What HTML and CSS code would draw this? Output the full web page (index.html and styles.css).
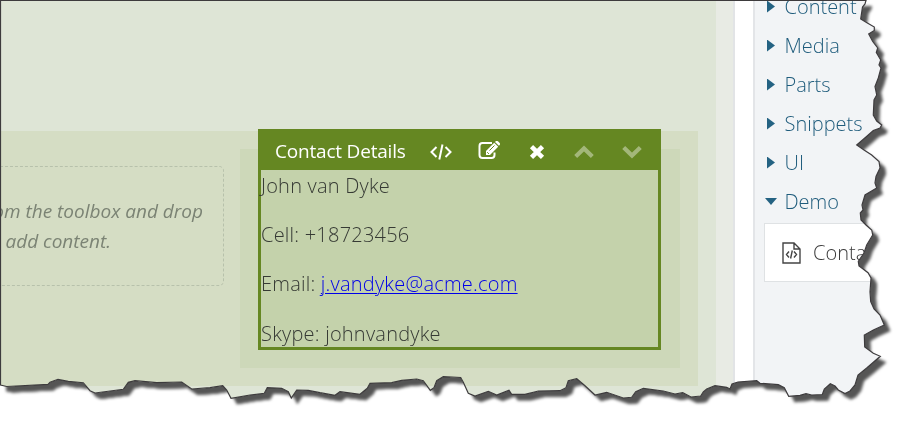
FILE: index.html
```
<!DOCTYPE html>
<html lang="en">
<head>
<meta charset="utf-8">
<title>Layout editor</title>
<link rel="stylesheet" href="styles.css">
</head>
<body>
<div class="sheet">
  <div class="shadow"><div class="page">
    <main class="editor">
      <section class="canvas">
        <div class="row">
          <div class="column">
            <div class="placeholder"><p>from the toolbox and drop</p><p class="second">to add content.</p></div>
          </div>
          <div class="column filled">
            <article class="widget">
              <header class="toolbar">
                <span class="title">Contact Details</span>
                <svg class="tool code" width="24" height="18" viewBox="0 0 24 18"><path d="M7.500 4 2.500 9l5 5M16.500 4l5 5-5 5M13.500 1.500l-3.200 15"/></svg>
                <svg class="tool edit" width="23" height="19" viewBox="0 0 23 19"><path d="M14 2H4.500Q1.500 2 1.500 5v9q0 3 3 3h9q3 0 3-3v-2.500"/><path class="solid" d="m8 10 8.200-8.200 4 4L12 14H8zM17 1l1-1q1-.6 2 .3l1.700 1.700q.8 1 0 1.900l-.8.8z"/><path class="cut" d="m11.500 9.500 5-5M9.200 11.200l1.700 1.700"/></svg>
                <svg class="tool close" width="16" height="16" viewBox="0 0 16 16"><path d="m2.500 2.700 11 10.600M13.500 2.700l-11 10.600"/></svg>
                <svg class="tool move up" width="20" height="14" viewBox="0 0 20 14"><path d="m1.700 11.500 8.300-8 8.300 8"/></svg>
                <svg class="tool move down" width="20" height="14" viewBox="0 0 20 14"><path d="m1.700 2.500 8.300 8 8.300-8"/></svg>
              </header>
              <div class="details">
                <p>John van Dyke</p>
                <p>Cell: +18723456</p>
                <p>Email: <a href="#">j.vandyke@acme.com</a></p>
                <p>Skype: johnvandyke</p>
              </div>
            </article>
          </div>
        </div>
      </section>
    </main>
    <aside class="toolbox">
      <ul>
        <li><i class="arrow"></i><span>Content</span></li>
        <li><i class="arrow"></i><span>Media</span></li>
        <li><i class="arrow"></i><span>Parts</span></li>
        <li><i class="arrow"></i><span>Snippets</span></li>
        <li><i class="arrow"></i><span>UI</span></li>
        <li><i class="arrow open"></i><span>Demo</span></li>
      </ul>
      <div class="element">
        <svg width="19" height="22" viewBox="0 0 19 22"><path d="M1 1h11l6 6v14H1zM12 1v6h6M7 9.500 4.500 12.500 7 15.500M12 9.500l2.500 3-2.500 3M10.300 8.500l-1.700 8"/></svg>
        <span>Contact</span>
      </div>
    </aside>
  </div></div>
  <svg class="outline" width="905" height="422" viewBox="0 0 905 422"><path d="M.5 385V.5H866L865 4 862.500 7 860.700 19 866.500 22.500 874.300 27 874.300 30.500 868.700 34 872.700 41.500 877.700 48 876.300 52.500 880.700 60 879 65 881 68 878.300 78 875 86.500 876.700 95 874 100 873.300 115 876.700 121 881.700 125 880 128 873.300 130.500 866 137 856.700 145 864 150 871.700 155 879 161.500 880 168 876 176.500 875 183 876.700 188 865 195 862 205 863 210 860.300 213 861 220 866 225 871.700 230 872.700 235 866.700 245 864 253 858.300 261.500 859 266 868 272.700 871 278 870 291.700 870.700 301.700 874 309 880 315 884.300 325 873.300 330 864.300 335 864.700 347 873.300 353.300 880.300 356.300 866.700 368 858 375 855 385 850 391 845 393.500 838.300 390 835 386 830.300 383.700 824.300 389 822.300 394.500 811.700 395 806 393.700 800 395.300 788.700 396.300 784.300 387.700 778.300 384.700 760 383.300 756.700 380.700 738 382 732 384 730 389 726.700 387.300 715 385.700 706.700 389 703.300 392 700.700 396 691 397 682.700 392.700 675 394 663.300 391 643.300 388.300 635.700 391.700 631.700 397.300 623.300 398 606.700 392.300 595 395 585 385.700 576.700 378.700 568.300 380.700 566 387.700 560 390.700 538.300 391 525 394.300 511.700 394.300 509 390.300 496.700 395 488.300 391.300 475 396 468.300 393.300 463.300 382.300 460.700 377.500 443.300 376.700 436.700 380.700 434 387.700 430.300 390.300 423.300 380.700 416.700 379 401.700 380.300 391.700 382.700 370 383.300 367.300 388.300 360 394.300 340 391.700 335 395.300 320 392.700 308.300 390.300 296.700 390 291.300 398 288.300 391.700 281.700 388.300 267.300 387.700 264.300 393.300 250 395 231 398.300 226.700 390 222.700 385.700 210 387.700 191.700 389 181.700 382 156.700 382.700 135 380.700 128.300 382.300 123.300 389.300 95 393 90 390.700 83.300 382.700 68.300 381.300 58 379.300 50 382.300 48 384.300 6.700 386.500Z"/></svg>
</div>
</body>
</html>
```
FILE: styles.css
```
* { box-sizing: border-box; }
body { margin: 0; background: #fff; font-family: "Open Sans", sans-serif; font-size: 20px; font-weight: 340; }
p, ul { margin: 0; padding: 0; }
.sheet { position: relative; width: 905px; height: 422px; overflow: hidden; }
.shadow { filter: drop-shadow(6px 6px 1.8px #555); }
.page {
  display: flex; width: 905px; height: 422px; background: #fff;
  clip-path: path("M0 385V0H866L865 4 862.5 7 860.7 19 866.5 22.5 874.3 27 874.3 30.5 868.7 34 872.7 41.5 877.7 48 876.3 52.5 880.7 60 879 65 881 68 878.3 78 875 86.5 876.7 95 874 100 873.3 115 876.7 121 881.7 125 880 128 873.3 130.5 866 137 856.7 145 864 150 871.7 155 879 161.5 880 168 876 176.5 875 183 876.7 188 865 195 862 205 863 210 860.3 213 861 220 866 225 871.7 230 872.7 235 866.7 245 864 253 858.3 261.5 859 266 868 272.7 871 278 870 291.7 870.7 301.7 874 309 880 315 884.3 325 873.3 330 864.3 335 864.7 347 873.3 353.3 880.3 356.3 866.7 368 858 375 855 385 850 391 845 393.5 838.3 390 835 386 830.3 383.7 824.3 389 822.3 394.5 811.7 395 806 393.7 800 395.3 788.7 396.3 784.3 387.7 778.3 384.7 760 383.3 756.7 380.7 738 382 732 384 730 389 726.7 387.3 715 385.7 706.7 389 703.3 392 700.7 396 691 397 682.7 392.7 675 394 663.3 391 643.3 388.3 635.7 391.7 631.7 397.3 623.3 398 606.7 392.3 595 395 585 385.7 576.7 378.7 568.3 380.7 566 387.7 560 390.7 538.3 391 525 394.3 511.7 394.3 509 390.3 496.7 395 488.3 391.3 475 396 468.3 393.3 463.3 382.3 460.7 377.5 443.3 376.7 436.7 380.7 434 387.7 430.3 390.3 423.3 380.7 416.7 379 401.7 380.3 391.7 382.7 370 383.3 367.3 388.3 360 394.3 340 391.7 335 395.3 320 392.7 308.3 390.3 296.7 390 291.3 398 288.3 391.7 281.7 388.3 267.3 387.7 264.3 393.3 250 395 231 398.3 226.7 390 222.7 385.7 210 387.7 191.7 389 181.7 382 156.7 382.7 135 380.7 128.3 382.3 123.3 389.3 95 393 90 390.7 83.3 382.7 68.3 381.3 58 379.3 50 382.3 48 384.3 6.7 386.5Z");
}
.outline { position: absolute; inset: 0; fill: none; stroke: #3d3b3d; stroke-width: 1.2; }

.editor { width: 735px; flex: none; padding-right: 17px; background: #e8ebe4; border-right: 2px solid #e2e4e6; }
.canvas { height: 422px; padding: 131px 18px 0 0; background: #dee5d6; }
.row { display: flex; gap: 16px; height: 255px; padding: 18px 18px 18px 0; background: #d5ddc4; }
.column { width: 224px; flex: none; padding-top: 17px; }
.filled { width: 440px; padding: 0 18px; background: #cdd8b9; }
.placeholder {
  height: 120px; padding: 29px 20px 0 0; border: 1.5px dashed #b7c1ab; border-left: 0;
  border-radius: 0 5px 5px 0; color: #7b8374; font-size: 19px; font-weight: 400; font-style: italic; line-height: 30px;
  white-space: nowrap; overflow: hidden; display: flex; flex-direction: column; align-items: flex-end;
}
.second { margin-right: 92px; }
.widget { width: 403.4px; height: 221px; margin-top: -20px; border: 3px solid #658722; background: #c4d2ab; }
.toolbar { display: flex; align-items: center; height: 38px; padding: 0 0 1px 14px; background: #658722; color: #fff; }
.title { width: 154px; flex: none; font-size: 19px; font-weight: 400; letter-spacing: -.2px; white-space: nowrap; }
.tool { flex: none; fill: none; stroke: #fff; stroke-width: 2; margin-top: 2px; }
.edit { margin-left: 25px; margin-top: -1px; }
.edit .solid { fill: #fff; stroke: none; }
.edit .cut { stroke: #658722; stroke-width: 1; }
.close { margin-left: 28px; stroke-width: 4.6; }
.move { stroke: #a3b77a; stroke-width: 4.2; }
.up { margin-left: 29px; }
.down { margin-left: 28px; }
.details { color: #363a34; letter-spacing: .22px; }
.details p { height: 49.2px; line-height: 31px; white-space: nowrap; }
.details a { color: #0000e8; text-decoration-thickness: 1px; text-underline-offset: 2px; }

.toolbox { width: 152px; flex: none; margin-left: 18px; border-left: 2px solid #e3e5e8; background: #f2f4f6; color: #1f5c7c; }
.toolbox ul { list-style: none; margin-top: -13px; }
.toolbox li { display: flex; align-items: center; height: 39px; padding-left: 12px; }
.arrow { width: 8px; height: 12px; margin-right: 9.500px; background: #246282; clip-path: polygon(0 0, 100% 50%, 0 100%); }
.arrow.open { width: 12px; height: 7px; margin: 0 7.5px 0 -2px; clip-path: polygon(0 0, 100% 0, 50% 100%); }
.element { display: flex; align-items: center; gap: 12px; height: 59px; margin: 2px 0 0 9px; padding-left: 17px; border: 1px solid #dfe2e4; background: #fff; color: #3c3c3c; }
.element svg { flex: none; fill: none; stroke: #444; stroke-width: 1.4; }
```
